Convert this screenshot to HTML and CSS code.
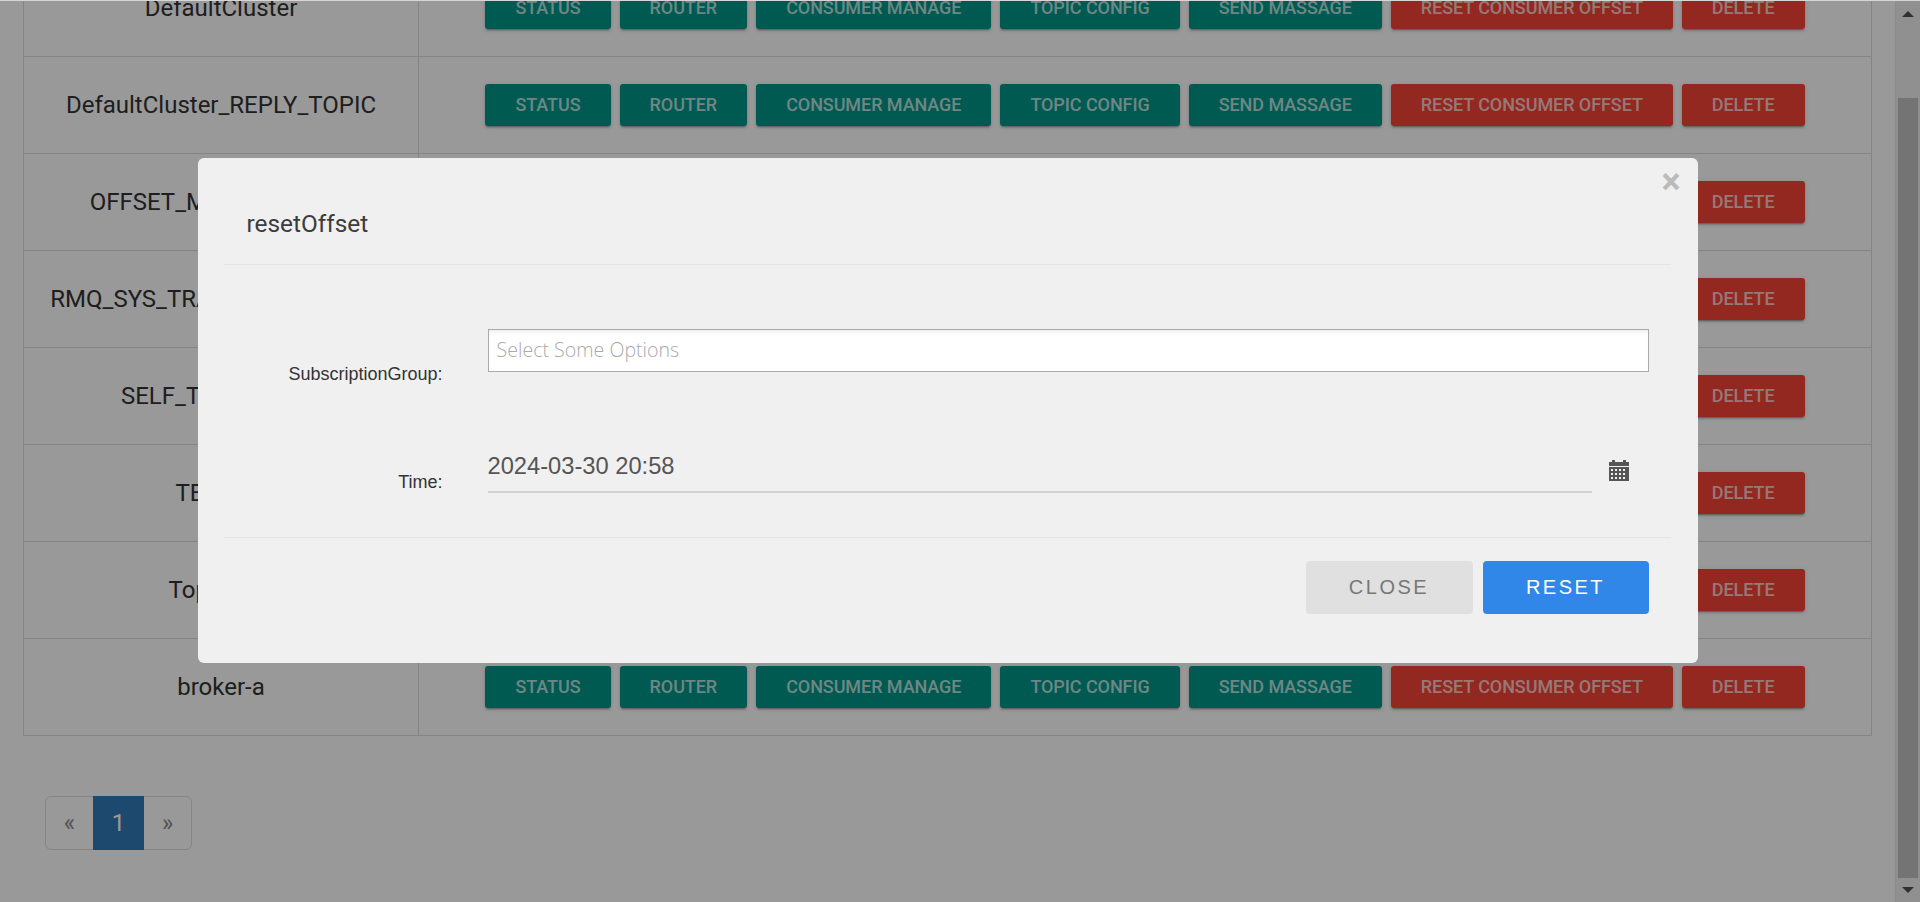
FILE: index.html
```html
<!DOCTYPE html>
<html lang="en">
  <head>
    <meta charset="UTF-8">
    <title>Topic</title>
    <link rel="stylesheet" href="styles.css">
  </head>
  <body>
    <div class="page">
      <table class="topic-table">
        <tr>
          <td class="topic-name">DefaultCluster</td>
          <td class="topic-actions"><div class="btn-row"><a class="btn">Status</a><a class="btn">Router</a><a class="btn">Consumer Manage</a><a class="btn">Topic Config</a><a class="btn">Send Massage</a><a class="btn btn-danger">Reset Consumer Offset</a><a class="btn btn-danger">Delete</a></div></td>
        </tr>
        <tr>
          <td class="topic-name">DefaultCluster_REPLY_TOPIC</td>
          <td class="topic-actions"><div class="btn-row"><a class="btn">Status</a><a class="btn">Router</a><a class="btn">Consumer Manage</a><a class="btn">Topic Config</a><a class="btn">Send Massage</a><a class="btn btn-danger">Reset Consumer Offset</a><a class="btn btn-danger">Delete</a></div></td>
        </tr>
        <tr>
          <td class="topic-name">OFFSET_MOVED_EVENT</td>
          <td class="topic-actions"><div class="btn-row"><a class="btn">Status</a><a class="btn">Router</a><a class="btn">Consumer Manage</a><a class="btn">Topic Config</a><a class="btn">Send Massage</a><a class="btn btn-danger">Reset Consumer Offset</a><a class="btn btn-danger">Delete</a></div></td>
        </tr>
        <tr>
          <td class="topic-name">RMQ_SYS_TRANS_HALF_TOPIC</td>
          <td class="topic-actions"><div class="btn-row"><a class="btn">Status</a><a class="btn">Router</a><a class="btn">Consumer Manage</a><a class="btn">Topic Config</a><a class="btn">Send Massage</a><a class="btn btn-danger">Reset Consumer Offset</a><a class="btn btn-danger">Delete</a></div></td>
        </tr>
        <tr>
          <td class="topic-name">SELF_TEST_TOPIC</td>
          <td class="topic-actions"><div class="btn-row"><a class="btn">Status</a><a class="btn">Router</a><a class="btn">Consumer Manage</a><a class="btn">Topic Config</a><a class="btn">Send Massage</a><a class="btn btn-danger">Reset Consumer Offset</a><a class="btn btn-danger">Delete</a></div></td>
        </tr>
        <tr>
          <td class="topic-name">TBW102</td>
          <td class="topic-actions"><div class="btn-row"><a class="btn">Status</a><a class="btn">Router</a><a class="btn">Consumer Manage</a><a class="btn">Topic Config</a><a class="btn">Send Massage</a><a class="btn btn-danger">Reset Consumer Offset</a><a class="btn btn-danger">Delete</a></div></td>
        </tr>
        <tr>
          <td class="topic-name">TopicTest</td>
          <td class="topic-actions"><div class="btn-row"><a class="btn">Status</a><a class="btn">Router</a><a class="btn">Consumer Manage</a><a class="btn">Topic Config</a><a class="btn">Send Massage</a><a class="btn btn-danger">Reset Consumer Offset</a><a class="btn btn-danger">Delete</a></div></td>
        </tr>
        <tr>
          <td class="topic-name">broker-a</td>
          <td class="topic-actions"><div class="btn-row"><a class="btn">Status</a><a class="btn">Router</a><a class="btn">Consumer Manage</a><a class="btn">Topic Config</a><a class="btn">Send Massage</a><a class="btn btn-danger">Reset Consumer Offset</a><a class="btn btn-danger">Delete</a></div></td>
        </tr>
      </table>

      <ul class="pagination">
        <li class="page-prev">«</li>
        <li class="page-current">1</li>
        <li class="page-next">»</li>
      </ul>
    </div>

    <div class="scrollbar">
      <div class="scroll-btn"><span class="arrow-up"></span></div>
      <div class="scroll-thumb"></div>
      <div class="scroll-btn"><span class="arrow-down"></span></div>
    </div>

    <div class="overlay">
      <div class="modal">
        <span class="modal-close">×</span>
        <div class="modal-header">
          <h4 class="modal-title">resetOffset</h4>
        </div>
        <div class="modal-body">
          <div class="form-row form-row-select">
            <label class="form-label">SubscriptionGroup:</label>
            <div class="select-box">Select Some Options</div>
          </div>
          <div class="form-row form-row-time">
            <label class="form-label">Time:</label>
            <div class="time-input">2024-03-30 20:58</div>
            <svg class="calendar-icon" width="20" height="21" viewBox="0 0 20 21">
              <path fill="#555" d="M3 0h3v2h8V0h3v2h3v4H0V2h3z"/>
              <path fill="#555" fill-rule="evenodd" d="M0 7h20v14H0zM2 9v2h2V9zm4 0v2h2V9zm4 0v2h2V9zm4 0v2h2V9zM2 13v2h2v-2zm4 0v2h2v-2zm4 0v2h2v-2zm4 0v2h2v-2zM2 17v2h2v-2zm4 0v2h2v-2zm4 0v2h2v-2zm4 0v2h2v-2z"/>
            </svg>
          </div>
        </div>
        <div class="modal-footer">
          <button class="modal-btn modal-btn-close">Close</button>
          <button class="modal-btn modal-btn-reset">Reset</button>
        </div>
      </div>
    </div>
  </body>
</html>
```

FILE: styles.css
```css
* {
  box-sizing: border-box;
}

html,
body {
  height: 100%;
}

body {
  margin: 0;
  overflow: hidden;
  background-color: #fff;
  color: #333;
  font-family: Roboto, sans-serif;
}

/* Page behind the dialog, scrolled down a little */
.page {
  width: 1895px;
  margin-top: -41px;
  padding: 0 23px;
}

.topic-table {
  width: 1849px;
  border-collapse: collapse;
  table-layout: fixed;
}

.topic-table td {
  height: 97px;
  border: 1px solid #ddd;
  text-align: center;
}

.topic-name {
  width: 395px;
  font-size: 24px;
}

.btn-row {
  display: flex;
  justify-content: center;
  gap: 9px;
}

.btn {
  display: block;
  height: 42px;
  padding: 0 30px;
  border-radius: 3px;
  background-color: #009688;
  color: rgba(255, 255, 255, 0.72);
  font-size: 18px;
  font-weight: 500;
  letter-spacing: -0.07px;
  line-height: 42px;
  text-transform: uppercase;
  white-space: nowrap;
  box-shadow: 0 2px 2px 0 rgba(0, 0, 0, 0.14), 0 3px 1px -2px rgba(0, 0, 0, 0.2), 0 1px 5px 0 rgba(0, 0, 0, 0.12);
}

.btn-danger {
  background-color: #f44336;
}

.pagination {
  display: inline-flex;
  margin: 60px 0 0 22px;
  padding: 0;
  list-style: none;
  border: 1px solid #ddd;
  border-radius: 6px;
  font-size: 24px;
  line-height: 52px;
  text-align: center;
}

.page-prev,
.page-next {
  width: 47px;
  color: #888;
}

.page-current {
  width: 51px;
  margin: -1px 0;
  padding-top: 1px;
  height: 54px;
  background-color: #337ab7;
  color: #fff;
}

/* Scrollbar, also under the backdrop */
.scrollbar {
  position: fixed;
  top: 0;
  right: 0;
  display: flex;
  flex-direction: column;
  width: 25px;
  height: 902px;
  padding: 0 2px;
  background-color: #f1f1f1;
  border-left: 1px solid #e8e8e8;
}

.scroll-btn {
  display: flex;
  justify-content: center;
  align-items: center;
  height: 24px;
}

.arrow-up {
  margin-top: 4px;
  border: 6px solid transparent;
  border-top: 0;
  border-bottom-color: #505050;
}

.arrow-down {
  border: 6px solid transparent;
  border-bottom: 0;
  border-top-color: #505050;
}

.scroll-thumb {
  height: 780px;
  margin-top: 74px;
  background-color: #c1c1c1;
}

/* Dialog */
.overlay {
  position: fixed;
  top: 0;
  left: 0;
  display: flex;
  justify-content: center;
  align-items: flex-start;
  width: 100%;
  height: 902px;
  padding: 157px 25px 0 0;
  background-color: rgba(0, 0, 0, 0.4);
  border-top: 1px solid #d6d6d6;
}

.modal {
  position: relative;
  width: 1500px;
  height: 505px;
  padding: 0 27px 0 26px;
  border-radius: 6px;
  background-color: #f0f0f0;
}

.modal-close {
  position: absolute;
  top: 6px;
  right: 17px;
  color: #bbb;
  font-size: 36px;
  font-weight: 700;
  line-height: 36px;
}

.modal-header {
  display: flex;
  align-items: flex-end;
  height: 107px;
  padding: 0 0 27px 23px;
  border-bottom: 1px solid #e5e5e5;
}

.modal-title {
  margin: 0;
  color: #3c3c3c;
  font-size: 24.4px;
  font-weight: 400;
  line-height: 26px;
}

.modal-body {
  height: 273px;
  padding-top: 64px;
  border-bottom: 1px solid #e5e5e5;
  font-family: "Liberation Sans", Arial, sans-serif;
}

.form-row {
  display: flex;
  align-items: flex-start;
}

.form-row-select {
  height: 117px;
}

.form-label {
  width: 219px;
  margin-right: 45px;
  font-size: 18px;
  line-height: 18px;
  text-align: right;
}

.form-row-select .form-label {
  padding-top: 36px;
}

.form-row-time .form-label {
  padding-top: 27px;
}

.select-box {
  width: 1161px;
  height: 43px;
  padding: 0 8px;
  border: 1px solid #aaa;
  background-color: #fff;
  color: #aaa;
  font-family: "Open Sans", sans-serif;
  font-size: 19.6px;
  font-weight: 300;
  line-height: 40px;
  box-shadow: inset 0 4px 5px -3px rgba(0, 0, 0, 0.1);
}

.time-input {
  width: 1104px;
  height: 47px;
  border-bottom: 2px solid #d2d2d2;
  color: #555;
  font-size: 23.7px;
  line-height: 40px;
}

.calendar-icon {
  margin: 14px 0 0 17px;
}

.modal-footer {
  display: flex;
  justify-content: flex-end;
  gap: 10px;
  padding: 23px 22px 0 0;
}

.modal-btn {
  height: 53px;
  padding: 0;
  border: 0;
  border-radius: 4px;
  font-family: "Liberation Sans", Arial, sans-serif;
  font-size: 20px;
  letter-spacing: 2.5px;
  text-transform: uppercase;
}

.modal-btn-close {
  width: 167px;
  background-color: #e0e0e0;
  color: #777;
}

.modal-btn-reset {
  width: 166px;
  background-color: #3087e8;
  color: #fff;
}
```
